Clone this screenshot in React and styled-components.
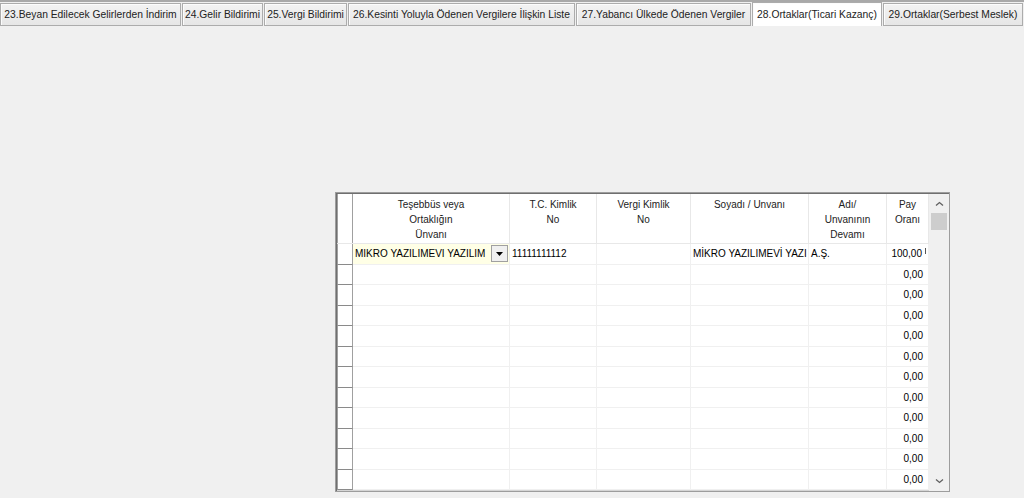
import React from 'react';
import styled, { createGlobalStyle } from 'styled-components';

const GlobalStyle = createGlobalStyle`
  html, body { margin: 0; padding: 0; background: #f0f0f0; }
  body { font-family: 'Liberation Sans', Arial, sans-serif; }
`

const Page = styled.div`
  width: 1024px;
  height: 498px;
  overflow: hidden;
  background: #f0f0f0;
  font-family: 'Liberation Sans', Arial, sans-serif;
  font-size: 10px;
  color: #000;
`

const TopStrip = styled.div`
  height: 2px;
  background: #a9a9a9;
`

const TabBar = styled.div`
  display: flex;
  align-items: flex-start;
  gap: 1px;
  height: 24px;
`

const Tab = styled.div`
  box-sizing: border-box;
  width: ${p => p.$w}px;
  height: ${p => (p.$active ? 24 : 23)}px;
  margin-top: ${p => (p.$active ? 0 : 1)}px;
  display: flex;
  align-items: center;
  justify-content: center;
  white-space: nowrap;
  border: 1px solid #acacac;
  border-bottom: ${p => (p.$active ? 'none' : '1px solid #acacac')};
  background: ${p => (p.$active ? '#ffffff' : 'linear-gradient(#f3f3f3, #e6e6e6)')};
  box-shadow: inset 1px 1px 0 #fcfcfc;
  color: #222;
  font-size: 10.3px;
`

const Content = styled.div`
  padding: 166px 0 0 335px;
`

const GridFrame = styled.div`
  display: flex;
  width: 615px;
  height: 300px;
  box-sizing: border-box;
  border: 1px solid #9d9d9d;
  box-shadow: inset 1px 1px 0 #6f6f6f, inset -1px -1px 0 #d5d5d5;
  background: #fff;
  overflow: hidden;
`

const TableArea = styled.div`
  display: flex;
  flex-direction: column;
  margin: 1px 0 0 1px;
  overflow: hidden;
`

const COLS = '16px 157px 87px 94px 118px 78px 42px'

const HeaderRow = styled.div`
  display: grid;
  grid-template-columns: ${COLS};
  height: 50px;
  box-sizing: border-box;
  border-bottom: 1px solid #e8e8e8;
  flex-shrink: 0;
`

const HeaderCell = styled.div`
  box-sizing: border-box;
  border-right: 1px solid ${p => (p.$indicator ? '#a0a0a0' : '#e8e8e8')};
  border-left: ${p => (p.$indicator ? '1px solid #a0a0a0' : 'none')};
  text-align: center;
  line-height: 15px;
  padding-top: 3px;
  color: #222;
`

const Row = styled.div`
  display: grid;
  grid-template-columns: ${COLS};
  height: 20.5px;
  flex-shrink: 0;
`

const Indicator = styled.div`
  box-sizing: border-box;
  border-left: 1px solid #a0a0a0;
  border-right: 1px solid #a0a0a0;
  border-bottom: 1px solid #8a8a8a;
  background: #fff;
`

const Cell = styled.div`
  box-sizing: border-box;
  display: flex;
  align-items: center;
  justify-content: ${p => (p.$right ? 'flex-end' : 'flex-start')};
  padding: ${p => (p.$right ? '0 5px 0 0' : '0 0 0 2px')};
  border-right: 1px solid #f0f0f0;
  border-bottom: 1px solid #f0f0f0;
  background: ${p => (p.$edit ? '#ffffe6' : '#fff')};
  white-space: nowrap;
  overflow: hidden;
`

const ComboText = styled.span`
  flex: 1;
  overflow: hidden;
`

const DropButton = styled.div`
  box-sizing: border-box;
  width: 17px;
  height: 17px;
  margin-right: 1px;
  border: 1px solid #a0a0a0;
  background: #f0f0f0;
  display: flex;
  align-items: center;
  justify-content: center;
  flex-shrink: 0;
`

const Clip = styled.span`
  display: inline-block;
  width: 2px;
  height: 6px;
  margin-left: 3px;
  margin-right: -5px;
  margin-bottom: 5px;
  border-left: 1px solid #555;
`

const ScrollBar = styled.div`
  width: 20px;
  margin-left: auto;
  background: #f0f0f0;
  display: flex;
  flex-direction: column;
  align-items: center;
  padding: 3px 0;
  box-sizing: border-box;
  margin-top: 1px;
`

const Arrow = styled.div`
  height: 14px;
  display: flex;
  align-items: center;
  justify-content: center;
`

const Thumb = styled.div`
  width: 16px;
  height: 17px;
  margin-top: 2px;
  background: #cdcdcd;
`

const Spacer = styled.div`
  flex: 1;
`

const tabs = [
  { label: '23.Beyan Edilecek Gelirlerden İndirim', w: 181 },
  { label: '24.Gelir Bildirimi', w: 81 },
  { label: '25.Vergi Bildirimi', w: 83 },
  { label: '26.Kesinti Yoluyla Ödenen Vergilere İlişkin Liste', w: 227 },
  { label: '27.Yabancı Ülkede Ödenen Vergiler', w: 175 },
  { label: '28.Ortaklar(Ticari Kazanç)', w: 130, active: true },
  { label: '29.Ortaklar(Serbest Meslek)', w: 140 },
]

const headers = [
  ['Teşebbüs veya', 'Ortaklığın', 'Ünvanı'],
  ['T.C. Kimlik', 'No'],
  ['Vergi Kimlik', 'No'],
  ['Soyadı / Unvanı'],
  ['Adı/', 'Unvanının', 'Devamı'],
  ['Pay', 'Oranı'],
]

const Chevron = ({ down }) => (
  <svg width="9" height="6" viewBox="0 0 9 6">
    <path
      d={down ? 'M1 1.5 L4.5 4.5 L8 1.5' : 'M1 4.5 L4.5 1.5 L8 4.5'}
      fill="none"
      stroke="#606060"
      strokeWidth="1.3"
    />
  </svg>
)

export default function App() {
  const emptyRows = Array.from({ length: 11 })
  return (
    <Page>
      <GlobalStyle />
      <TopStrip />
      <TabBar>
        {tabs.map(t => (
          <Tab key={t.label} $w={t.w} $active={t.active}>{t.label}</Tab>
        ))}
      </TabBar>
      <Content>
        <GridFrame>
          <TableArea>
            <HeaderRow>
              <HeaderCell $indicator />
              {headers.map((lines, i) => (
                <HeaderCell key={i}>
                  {lines.map(l => <div key={l}>{l}</div>)}
                </HeaderCell>
              ))}
            </HeaderRow>
            <Row>
              <Indicator />
              <Cell $edit>
                <ComboText>MİKRO YAZILIMEVİ YAZILIM</ComboText>
                <DropButton>
                  <svg width="7" height="4" viewBox="0 0 7 4"><path d="M0 0 H7 L3.5 4 Z" fill="#000" /></svg>
                </DropButton>
              </Cell>
              <Cell>11111111112</Cell>
              <Cell />
              <Cell>MİKRO YAZILIMEVİ YAZI</Cell>
              <Cell>A.Ş.</Cell>
              <Cell $right>100,00<Clip /></Cell>
            </Row>
            {emptyRows.map((_, i) => (
              <Row key={i}>
                <Indicator />
                <Cell />
                <Cell />
                <Cell />
                <Cell />
                <Cell />
                <Cell $right>0,00</Cell>
              </Row>
            ))}
          </TableArea>
          <ScrollBar>
            <Arrow><Chevron /></Arrow>
            <Thumb />
            <Spacer />
            <Arrow><Chevron down /></Arrow>
          </ScrollBar>
        </GridFrame>
      </Content>
    </Page>
  )
}
